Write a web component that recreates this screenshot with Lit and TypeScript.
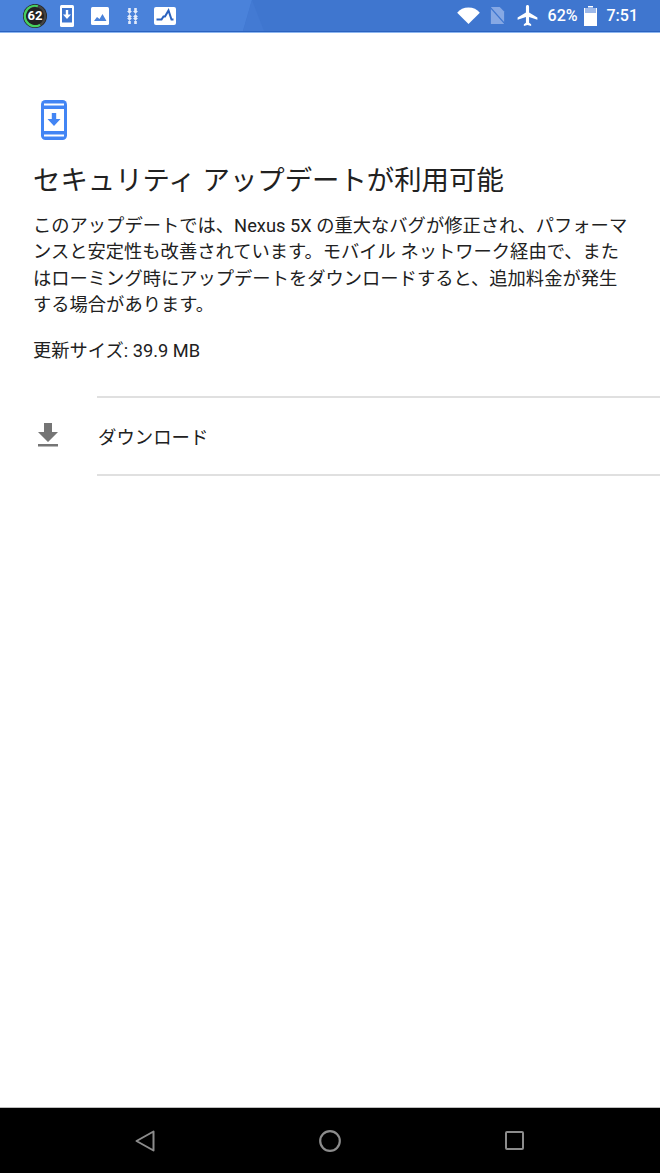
import { LitElement, html, css } from "lit";
import { customElement } from "lit/decorators.js";

@customElement("app-root")
export class AppRoot extends LitElement {
  static styles = css`
    :host { display: flex; flex-direction: column; height: 1173px; width: 660px; background: #fff; overflow: hidden;
      font-family: Roboto, "Noto Sans CJK JP", sans-serif; color: #212121; }
    .status { height: 31px; flex: none; background: #3f76cf; border-bottom: 1px solid #2a62bf; display: flex; align-items: center; color: #fff; position: relative; overflow: hidden; }
    .status::before { content: ""; position: absolute; inset: 0; background: #4a82da; clip-path: polygon(0 0, 252px 0, 243px 100%, 0 100%); }
    .status::after { content: ""; position: absolute; inset: 0; background: #437ad3; clip-path: polygon(252px 0, 264px 100%, 243px 100%); }
    .edge { height: 1px; flex: none; background: #8db6f0; }
    .left, .right { position: relative; z-index: 1; display: flex; align-items: center; }
    .left { padding-left: 23px; }
    .badge { width: 24px; height: 24px; flex: none; position: relative; display: flex; align-items: center; justify-content: center; font-size: 13px; font-weight: 700; color: #fff; }
    .badge svg { position: absolute; inset: 0; }
    .badge span { position: relative; }
    .right { margin-left: auto; padding-right: 22px; font-size: 16px; font-weight: 500; }
    .status svg { display: block; flex: none; }
    .i1 { margin-left: 13px; } .i2 { margin-left: 17px; } .i3 { margin-left: 18px; } .i4 { margin-left: 16px; }
    .r2 { margin-left: 10px; } .r3 { margin-left: 10px; }
    .pct { margin-left: 8px; } .batt { margin-left: 6px; } .time { margin-left: 10px; }
    main { flex: 1; padding: 67px 33px 0; display: flex; flex-direction: column; align-items: flex-start; }
    .hero { display: block; margin-left: 8px; }
    h1 { margin: 23px 0 0; font-size: 27.4px; line-height: 36px; font-weight: 400; color: #212121; white-space: nowrap; }
    .desc { margin: 14px 0 0; font-size: 18.3px; line-height: 26.4px; width: 610px; }
    .desc div { white-space: nowrap; }
    .size { margin: 18.4px 0 0; font-size: 18.25px; line-height: 28px; }
    .row { margin: 31px -33px 0; align-self: stretch; display: flex; align-items: stretch; }
    .row .ico { width: 97px; flex: none; display: flex; align-items: center; padding: 0 0 2px 38px; box-sizing: border-box; }
    .row .lab { flex: 1; height: 76px; padding-left: 1px; border-top: 2px solid #e0e0e0; border-bottom: 2px solid #e0e0e0; display: flex; align-items: center; font-size: 18.4px; }
    .nav { height: 65px; flex: none; background: #000; border-top: 1px solid #bdbdbd; display: flex; align-items: center; }
    .nav .grp { display: flex; width: 100%; align-items: center; padding: 0 136px 0 135px; box-sizing: border-box; justify-content: space-between; }
  `;

  render() {
    return html`
      <div class="status">
        <div class="left">
          <div class="badge">
            <svg width="24" height="24" viewBox="0 0 24 24"><circle cx="12" cy="12" r="12" fill="#222"/><circle cx="12" cy="12" r="10.200" fill="none" stroke="#444" stroke-width="2.200"/><circle cx="12" cy="12" r="10.200" fill="none" stroke="#45d160" stroke-width="2.200" stroke-dasharray="40 64" transform="rotate(60 12 12)"/></svg>
            <span>62</span>
          </div>
          <svg class="i1" width="14" height="22" viewBox="0 0 14 22"><rect width="14" height="22" rx="1.500" fill="#fff"/><rect x="2" y="3" width="10" height="14.500" fill="#3f76cf"/><path d="M5.800 5h2.400v4.500H11l-4 4.500-4-4.500h2.800z" fill="#fff"/></svg>
          <svg class="i2" width="18" height="18" viewBox="0 0 18 18"><rect width="18" height="18" rx="1.500" fill="#fff"/><path d="M3 14l3-4 2.500 2 3-5 4 7z" fill="#4a82da"/></svg>
          <svg class="i3" width="11" height="16" viewBox="0 0 11 16" fill="#e3ebfa"><path d="M1.200 0h2.600v3H5L2.500 6 0 3h1.200zM7.200 0h2.600v3H11L8.500 6 6 3h1.200zM0 9l2.500-3L5 9H3.800v1H5l-2.500 3L0 10h1.200V9zM6 9l2.500-3L11 9H9.800v1H11l-2.500 3L6 10h1.200V9zM1.200 13h2.600v3H1.200zM7.200 13h2.600v3H7.200z"/></svg>
          <svg class="i4" width="22" height="18" viewBox="0 0 22 18"><rect width="22" height="18" rx="2" fill="#fff"/><path d="M2.500 12.500H7.500L9.500 9.500H11L14.500 3.500L17.500 12.500H19.500" fill="none" stroke="#2a62bf" stroke-width="2"/></svg>
        </div>
        <div class="right">
          <svg width="23" height="17" viewBox="0 0 24 18"><path d="M0 6C3 2.500 7 .5 12 .5S21 2.500 24 6L12 18z" fill="#fff"/></svg>
          <svg class="r2" width="15" height="17" viewBox="0 0 17 19"><path d="M1 0h10l5 5v14H1z" fill="#86a8e4"/><path d="M0 0l17 19" stroke="#3f76cf" stroke-width="1.500"/></svg>
          <svg class="r3" width="25" height="25" viewBox="0 0 24 24"><path d="M21 16v-2l-8-5V3.500C13 2.670 12.330 2 11.500 2S10 2.670 10 3.500V9l-8 5v2l8-2.500V19l-2 1.500V22l3.500-1 3.500 1v-1.500L13 19v-5.500z" fill="#fff" transform="translate(.5 0)"/></svg>
          <span class="pct">62%</span>
          <svg class="batt" width="13" height="20" viewBox="0 0 13 20"><path d="M4 0h5v2h4v18H0V2h4z" fill="#fff"/><path d="M4 1h5v1h3v5H1V2h3z" fill="#9db9ea"/></svg>
          <span class="time">7:51</span>
        </div>
      </div>
      <div class="edge"></div>
      <main>
        <svg class="hero" width="26" height="40" viewBox="0 0 26 40"><rect width="26" height="40" rx="4.500" fill="#4285f4"/><rect x="3" y="9" width="20" height="22" fill="#fff"/><rect x="3" y="3.500" width="20" height="2" fill="#fff"/><rect x="3" y="34.500" width="20" height="2" fill="#fff"/><path d="M10.800 13h4.400v6h4.300L13 26l-6.500-7h4.300z" fill="#4285f4"/></svg>
        <h1>セキュリティ アップデートが利用可能</h1>
        <div class="desc">
          <div>このアップデートでは、Nexus 5X の重大なバグが修正され、パフォーマ</div>
          <div>ンスと安定性も改善されています。モバイル ネットワーク経由で、また</div>
          <div>はローミング時にアップデートをダウンロードすると、追加料金が発生</div>
          <div>する場合があります。</div>
        </div>
        <div class="size">更新サイズ: 39.9 MB</div>
        <div class="row">
          <div class="ico"><svg width="20" height="24" viewBox="1 0 20 24"><path d="M7 0h8v9h6L11 19 1 9h6z" fill="#757575"/><rect x="1" y="21" width="20" height="2.500" fill="#757575"/></svg></div>
          <div class="lab">ダウンロード</div>
        </div>
      </main>
      <div class="nav">
        <div class="grp">
          <svg width="20" height="22" viewBox="0 0 20 22"><path d="M18.500 1.500v19L1.500 11z" fill="none" stroke="#8c8c8c" stroke-width="2" stroke-linejoin="round"/></svg>
          <svg width="22" height="22" viewBox="0 0 22 22"><circle cx="11" cy="11" r="9.800" fill="none" stroke="#8c8c8c" stroke-width="2.200"/></svg>
          <svg width="19" height="19" viewBox="0 0 19 19"><rect x="1" y="1" width="17" height="17" rx="1" fill="none" stroke="#8c8c8c" stroke-width="2"/></svg>
        </div>
      </div>
    `;
  }
}
